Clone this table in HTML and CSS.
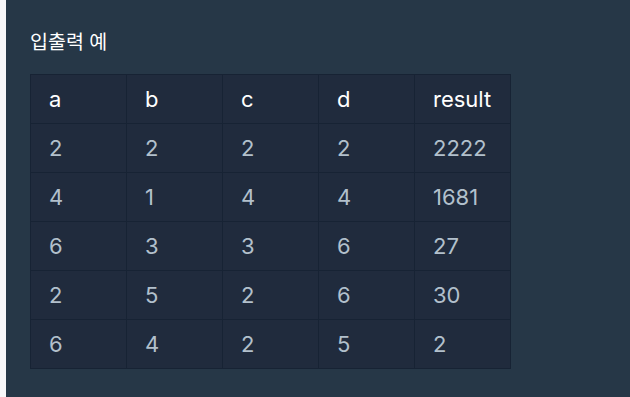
FILE: index.html
```html
<!DOCTYPE html>
<html lang="ko">
<head>
<meta charset="utf-8">
<link rel="stylesheet" href="styles.css">
</head>
<body>
<div class="page">
  <div class="strip"></div>
  <section class="panel">
    <h5 class="title">입출력 예</h5>
    <table class="io">
      <thead>
        <tr><th>a</th><th>b</th><th>c</th><th>d</th><th>result</th></tr>
      </thead>
      <tbody>
        <tr><td>2</td><td>2</td><td>2</td><td>2</td><td>2222</td></tr>
        <tr><td>4</td><td>1</td><td>4</td><td>4</td><td>1681</td></tr>
        <tr><td>6</td><td>3</td><td>3</td><td>6</td><td>27</td></tr>
        <tr><td>2</td><td>5</td><td>2</td><td>6</td><td>30</td></tr>
        <tr><td>6</td><td>4</td><td>2</td><td>5</td><td>2</td></tr>
      </tbody>
    </table>
  </section>
</div>
</body>
</html>
```

FILE: styles.css
```css
html, body {
  margin: 0;
  padding: 0;
  height: 100%;
}
body {
  font-family: Inter, "Noto Sans CJK KR", sans-serif;
  background: #f7f7f9;
}
.page {
  display: flex;
  height: 397px;
  overflow: hidden;
}
.strip {
  width: 6px;
  flex: none;
  background: #f7f7f9;
}
.panel {
  flex: 1;
  background: #263747;
  padding: 26px 24px 0 24px;
}
.title {
  margin: 0 0 18px 0;
  font-family: "Noto Sans CJK KR", sans-serif;
  font-size: 19.5px;
  line-height: 30px;
  font-weight: 400;
  color: #ffffff;
}
.io {
  border-collapse: collapse;
  table-layout: fixed;
  width: 481px;
  background: #202b3d;
}
.io th, .io td {
  border: 1px solid #172334;
  height: 49px;
  padding: 0 0 0 18px;
  text-align: left;
  font-size: 22px;
  font-weight: 400;
  box-sizing: border-box;
}
.io th {
  color: #ffffff;
}
.io td {
  color: #b2c0cc;
}
```
